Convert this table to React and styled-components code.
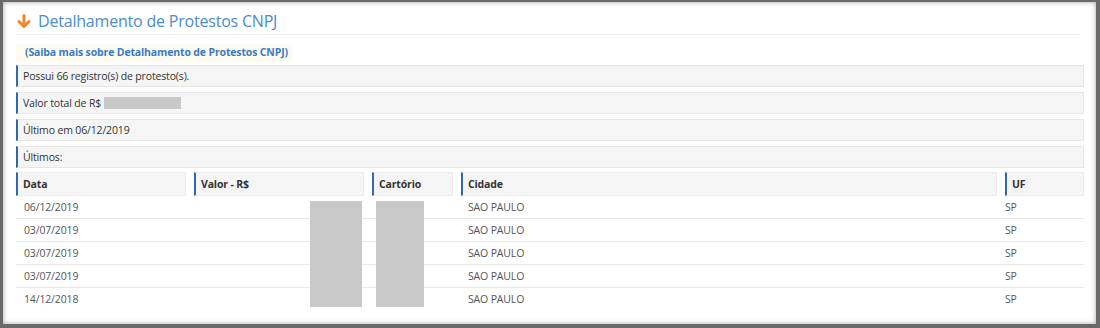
import React from "react";
import styled, { createGlobalStyle } from "styled-components";

const GlobalStyle = createGlobalStyle`
  html, body {
    margin: 0;
    padding: 0;
    background: #ffffff;
  }
  body {
    font-family: "Open Sans", "Liberation Sans", sans-serif;
  }
`;

const Frame = styled.div`
  width: 1100px;
  height: 328px;
  box-sizing: border-box;
  border: 2px solid #6a6a6a;
  border-left-width: 3px;
  border-right-width: 4px;
  border-bottom-width: 4px;
  box-shadow: inset 0 0 5px rgba(0, 0, 0, 0.35);
  padding: 6px 12px 0 13px;
  background: #fff;
  overflow: hidden;
`;

const Header = styled.div`
  display: flex;
  align-items: center;
  gap: 7px;
  height: 26px;
  padding-left: 1px;
  border-bottom: 1px solid #eeeeee;
  margin-right: 4px;
`;

const Title = styled.h3`
  margin: 0;
  font-size: 16px;
  font-weight: 400;
  color: #4b8cce;
  letter-spacing: -0.2px;
`;

const MoreLink = styled.a`
  display: inline-block;
  margin-top: 9px;
  padding: 2px 0 2px 9px;
  width: 267px;
  background: #fdfbef;
  color: #3a7cc4;
  font-size: 10.5px;
  font-weight: 700;
  text-decoration: none;
  line-height: 13px;
  letter-spacing: -0.15px;
`;

const InfoList = styled.div`
  display: flex;
  flex-direction: column;
  gap: 5px;
  margin-top: 4px;
`;

const InfoRow = styled.div`
  height: 22px;
  box-sizing: border-box;
  display: flex;
  align-items: center;
  padding-left: 5px;
  background: #f5f5f5;
  border: 1px solid #e6e6e6;
  border-left: 2px solid #2f6aa8;
  font-size: 10.5px;
  color: #333;
  letter-spacing: -0.15px;
`;

const Redact = styled.span`
  display: inline-block;
  width: ${(p) => p.$w}px;
  height: 12px;
  margin-left: 3px;
  background: #c8c8c8;
`;

const Grid = styled.div`
  display: grid;
  grid-template-columns: 178px 178px 89px 544px 79px;
`;

const HeadRow = styled(Grid)`
  margin-top: 4px;
  height: 24px;
`;

const HeadCell = styled.div`
  margin-right: ${(p) => (p.$last ? 0 : 8)}px;
  display: flex;
  align-items: center;
  padding-left: 5px;
  background: #f5f5f5;
  border: 1px solid #ececec;
  border-left: 2px solid #2f6aa8;
  font-size: 10.5px;
  font-weight: 700;
  color: #333;
  letter-spacing: -0.15px;
`;

const Body = styled(Grid)`
  grid-template-rows: repeat(5, 23px);
`;

const Cell = styled.div`
  grid-row: ${(p) => p.$row};
  grid-column: ${(p) => p.$col};
  display: flex;
  align-items: center;
  padding-left: ${(p) => p.$pad ?? 8}px;
  border-bottom: 1px solid ${(p) => (p.$lastRow ? "transparent" : "#e8e8e8")};
  font-size: 10.5px;
  color: #555;
  letter-spacing: -0.15px;
`;

const Block = styled.div`
  grid-row: 1 / -1;
  grid-column: ${(p) => p.$col};
  justify-self: ${(p) => p.$justify || "start"};
  width: ${(p) => p.$w}px;
  margin: 5px ${(p) => p.$mr || 0}px 4px ${(p) => p.$ml || 0}px;
  background: #c8c8c8;
`;

const ArrowDown = () => (
  <svg width="14" height="15" viewBox="0 0 14 15">
    <path
      d="M7 1.5 V12 M2 7.5 L7 12.5 L12 7.5"
      fill="none"
      stroke="#f0862a"
      strokeWidth="3"
      strokeLinecap="round"
      strokeLinejoin="round"
    />
  </svg>
);

const rows = [
  { data: "06/12/2019", cidade: "SAO PAULO", uf: "SP" },
  { data: "03/07/2019", cidade: "SAO PAULO", uf: "SP" },
  { data: "03/07/2019", cidade: "SAO PAULO", uf: "SP" },
  { data: "03/07/2019", cidade: "SAO PAULO", uf: "SP" },
  { data: "14/12/2018", cidade: "SAO PAULO", uf: "SP" },
];

const App = () => {
  return (
    <>
      <GlobalStyle />
      <Frame>
        <Header>
          <ArrowDown />
          <Title>Detalhamento de Protestos CNPJ</Title>
        </Header>
        <MoreLink href="#">(Saiba mais sobre Detalhamento de Protestos CNPJ)</MoreLink>
        <InfoList>
          <InfoRow>Possui 66 registro(s) de protesto(s).</InfoRow>
          <InfoRow>
            Valor total de R$ <Redact $w={77} />
          </InfoRow>
          <InfoRow>Último em 06/12/2019</InfoRow>
          <InfoRow>Últimos:</InfoRow>
        </InfoList>
        <HeadRow>
          <HeadCell>Data</HeadCell>
          <HeadCell>Valor - R$</HeadCell>
          <HeadCell>Cartório</HeadCell>
          <HeadCell>Cidade</HeadCell>
          <HeadCell $last>UF</HeadCell>
        </HeadRow>
        <Body>
          {rows.map((r, i) => {
            const last = i === rows.length - 1;
            const row = i + 1;
            return (
              <React.Fragment key={i}>
                <Cell $row={row} $col={1} $lastRow={last}>{r.data}</Cell>
                <Cell $row={row} $col={2} $lastRow={last} />
                <Cell $row={row} $col={3} $lastRow={last} />
                <Cell $row={row} $col={4} $lastRow={last} $pad={7}>{r.cidade}</Cell>
                <Cell $row={row} $col={5} $lastRow={last} $pad={0}>{r.uf}</Cell>
              </React.Fragment>
            );
          })}
          <Block $col={2} $justify="end" $w={52} $mr={10} />
          <Block $col={3} $w={48} $ml={4} />
        </Body>
      </Frame>
    </>
  );
};

export default App;
